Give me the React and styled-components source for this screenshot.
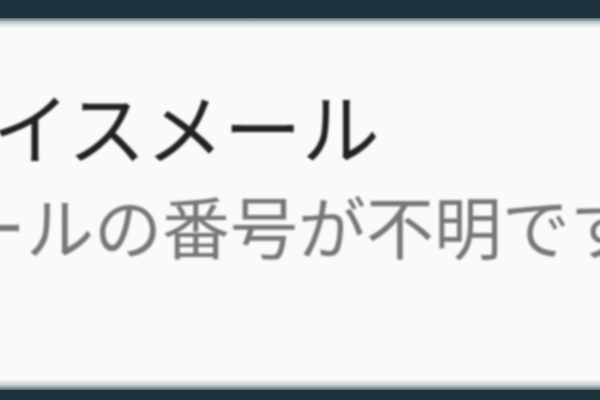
import React from "react";
import styled, { createGlobalStyle } from "styled-components";

const Global = createGlobalStyle`
  html, body { margin: 0; padding: 0; background: #fafafa; }
  body { font-family: "Noto Sans CJK JP", "Noto Sans", sans-serif; }
`;

const Page = styled.div`
  width: 600px;
  height: 400px;
  display: flex;
  flex-direction: column;
  overflow: hidden;
  background: #fafafa;
`;

const Bar = styled.div`
  height: ${(p) => p.$h}px;
  flex: none;
  background: #1c333d;
`;

const Shade = styled.div`
  height: ${(p) => p.$h}px;
  flex: none;
  background: linear-gradient(
    ${(p) => (p.$up ? "to top" : "to bottom")},
    #5a6a70 0%,
    #c8cfd1 45%,
    #fafafa 100%
  );
`;

const Content = styled.div`
  flex: 1;
  display: flex;
  flex-direction: column;
  padding-top: 58px;
  overflow: hidden;
`;

const Title = styled.div`
  font-size: 78px;
  line-height: 1;
  color: #222;
  white-space: nowrap;
  margin-left: -8px;
  filter: blur(0.8px);
`;

const Subtitle = styled.div`
  font-size: 68px;
  line-height: 1;
  color: #777;
  white-space: nowrap;
  margin-left: -42px;
  margin-top: 27px;
  filter: blur(0.8px);
`;

export default function App() {
  return (
    <>
      <Global />
      <Page>
        <Bar $h={18} />
        <Shade $h={10} />
        <Content>
          <Title>イスメール</Title>
          <Subtitle>ールの番号が不明です</Subtitle>
        </Content>
        <Shade $h={11} $up />
        <Bar $h={10} />
      </Page>
    </>
  );
}
